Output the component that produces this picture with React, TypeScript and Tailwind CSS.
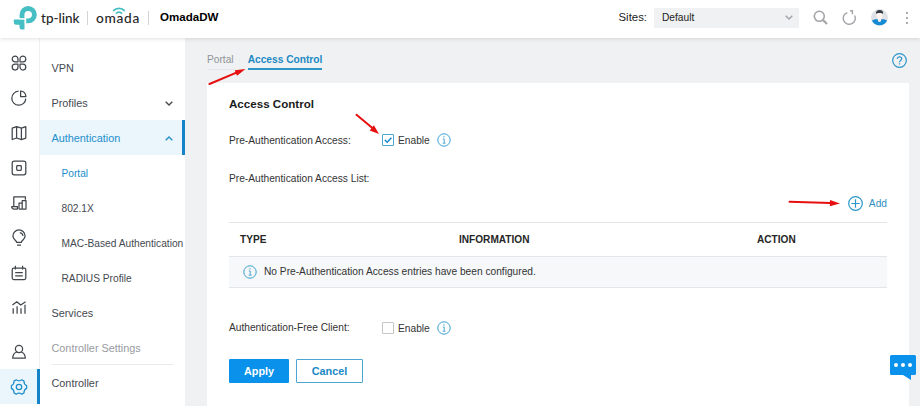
import type { ReactNode } from "react";
import clsx from "clsx";

interface MenuItem {
  label: string;
  sub?: boolean;
  active?: boolean;
  arrow?: "up" | "down";
}

const menu: MenuItem[] = [
  { label: "VPN" },
  { label: "Profiles", arrow: "down" },
  { label: "Authentication", arrow: "up", active: true },
  { label: "Portal", sub: true, active: true },
  { label: "802.1X", sub: true },
  { label: "MAC-Based Authentication", sub: true },
  { label: "RADIUS Profile", sub: true },
  { label: "Services" },
];

const navIcons: ReactNode[] = [
  <>
    <path d="M7 3.900a2.900 2.900 0 1 0-2.900 2.900H7z" />
    <path d="M9 6.800V3.900a2.900 2.900 0 1 1 2.900 2.900z" />
    <path d="M7 9.200v2.900a2.900 2.900 0 1 1-2.900-2.900z" />
    <path d="M9 9.200v2.900a2.900 2.900 0 1 0 2.900-2.900z" />
  </>,
  <>
    <path d="M7.600 1.200A7 7 0 1 0 14.800 8.600" />
    <path d="M9.600 1v5.600h5.300C14.700 3.600 12.600 1.300 9.600 1z" />
  </>,
  <path d="M1.200 3.100 5.600 1.600l4.800 1.600 4.400-1.500v11.400l-4.400 1.500L5.600 13l-4.400 1.500zM5.600 1.600V13M10.400 3.200v11.400" />,
  <>
    <rect x="1.200" y="1.200" width="13.600" height="13.600" rx="2" />
    <rect x="5.700" y="5.700" width="4.600" height="4.600" rx="0.800" />
  </>,
  <>
    <path d="M2.800 11.400V1.800h11.600v3M.8 11.600h5.600v2.400H2.400L.8 12.800z" />
    <path d="M8 14V8h3.200M8 14h7V5.600h-3.800V14" />
  </>,
  <>
    <path d="M5.700 12.400C5.500 10.600 1.900 9.400 1.900 6a6.100 6.100 0 0 1 12.200 0c0 3.400-3.600 4.600-3.800 6.400z" />
    <path d="M6 15.200h4M8.800 2.600c1.700.3 2.900 1.500 3.200 3.200" />
  </>,
  <>
    <rect x="1.200" y="3.200" width="13.600" height="11.400" rx="1.500" />
    <path d="M4.400.8v3.600M11.600.8v3.600M4.200 7.600h7.600M4.200 10.900h7.600" />
  </>,
  <path d="M2.200 8.200v5.600M6.100 6.200v7.600M10 8.200v5.600M14 4.700v9.100M1.400 5 5.800 1.800 9.700 5l4.900-3.200" />,
];

function NavIcon({ children }: { children: ReactNode }) {
  return (
    <svg
      className="size-4 overflow-visible"
      viewBox="0 0 16 16"
      fill="none"
      stroke="currentColor"
      strokeWidth="1.25"
      strokeLinejoin="round"
    >
      {children}
    </svg>
  );
}

function InfoIcon() {
  return (
    <svg className="size-[14px] shrink-0" viewBox="0 0 14 14" fill="none" stroke="#3b9fcf">
      <circle cx="7" cy="7" r="6.200" />
      <path d="M5.800 6h1.400v4M5.700 10.200h2.800" strokeWidth="0.900" />
      <path d="M6.400 3.900h1.100" strokeWidth="1.200" />
    </svg>
  );
}

function Chevron({ up }: { up?: boolean }) {
  return (
    <svg
      className={clsx("h-[5px] w-2", up && "rotate-180")}
      viewBox="0 0 8 5"
      fill="none"
      stroke="currentColor"
      strokeWidth="1.400"
    >
      <path d="M.7.700 4 4 7.300.700" />
    </svg>
  );
}

function EnableBox({ checked }: { checked?: boolean }) {
  return (
    <div className="flex items-center">
      <span
        className={clsx(
          "flex size-3 items-center justify-center rounded-[1px] border bg-white",
          checked ? "border-[#4aa5d2]" : "border-[#c4c6c9]"
        )}
      >
        {checked && (
          <svg className="size-2" viewBox="0 0 8 8" fill="none" stroke="#168acb" strokeWidth="1.500">
            <path d="M.8 4 3.200 6.300 7.400 1.700" />
          </svg>
        )}
      </span>
      <span className="mr-[7px] ml-1 pt-px">Enable</span>
      <InfoIcon />
    </div>
  );
}

function Header() {
  return (
    <header className="relative z-10 flex h-[38px] shrink-0 items-center bg-white pb-[3px] shadow-[0_1px_4px_rgba(0,0,0,0.12)]">
      <svg className="mt-px ml-[13px] size-6" viewBox="0 0 24 24" fill="none">
        <path d="M9 12.300V8.700a6.200 6.200 0 1 1 6.200 6.200H13.200" stroke="#45bec4" strokeWidth="4.800" />
        <path
          d="M.8 13.500h10.700v10H9a2.500 2.500 0 0 1-2.500-2.500v-2.300H3.300A2.500 2.500 0 0 1 .8 16.200z"
          fill="#45bec4"
        />
        <path d="M6 12.900h6.200v4.500" stroke="#fff" strokeWidth="0.900" />
      </svg>
      <span className="mt-[2px] ml-[4px] w-[39px] font-['Lato',sans-serif] text-[13.500px] leading-none font-medium whitespace-nowrap text-[#262626]">
        tp-link
      </span>
      <span className="ml-[7px] h-[14px] w-px bg-[#d2d4d6]" />
      <div className="relative ml-[8px] w-[44px] font-['Lato',sans-serif] text-[13.700px] leading-none font-medium tracking-[0.700px] text-[#262626]">
        omada
        <svg
          className="absolute -top-[4px] left-[16px] h-[8px] w-[14px]"
          viewBox="0 0 14 8"
          fill="none"
          stroke="#45bec4"
          strokeWidth="1.700"
        >
          <path d="M1.200 3.900c3-3.500 8.600-3.500 11.600 0M4 6.600c1.600-1.900 4.400-1.900 6 0" />
        </svg>
      </div>
      <span className="ml-[8px] h-[14px] w-px bg-[#d2d4d6]" />
      <span className="ml-[11px] text-[11.550px] font-bold text-black">OmadaDW</span>
      <div className="ml-auto flex items-center">
        <span className="mr-[7px] text-[11.400px] text-[#222]">Sites:</span>
        <div className="flex h-5 w-[145px] items-center justify-between bg-[#f0f1f2] pr-[6px] pl-[8px] text-[#222]">
          <span>Default</span>
          <span className="text-[#a0a3a6]">
            <Chevron />
          </span>
        </div>
        <svg className="ml-[14px] size-[15px]" viewBox="0 0 15 15" fill="none" stroke="#a2a4a7">
          <circle cx="6.300" cy="6.300" r="5" strokeWidth="1.600" />
          <path d="m10 10 4 4" strokeWidth="2.200" />
        </svg>
        <svg className="ml-[14px] size-[15px]" viewBox="0 0 15 15" fill="none" stroke="#a2a4a7" strokeWidth="1.400">
          <path d="M5.300 2.600A6 6 0 1 0 12.600 5.500" />
          <path d="M8 .800h2.400v3.400" />
        </svg>
        <svg className="ml-[14px] size-[17px]" viewBox="0 0 17 17">
          <circle cx="8.500" cy="8.500" r="8.500" fill="#dfe3e7" />
          <path d="M.9 11.600c1.500-1 3.200-1.300 4.800-1.300h5.600c1.600 0 3.300.3 4.800 1.300a8.500 8.500 0 0 1-15.200 0z" fill="#1689d3" />
          <path d="M6.800 8h3.400v3.200a1.700 1.700 0 0 1-3.400 0z" fill="#f8eeea" />
          <ellipse cx="8.500" cy="6.200" rx="3" ry="3.700" fill="#fff4f0" />
          <path d="M5 4.900C4.600 2.400 6.200 1 8.600 1c2.500 0 4 1.400 3.400 3.900-1-.6-1.400-1.100-4.600-1-1 0-1.600.4-2.400 1z" fill="#343a46" />
        </svg>
        <div className="mr-[12px] ml-[18px] flex flex-col gap-[3px]">
          <i className="size-[2px] bg-[#aaacae]" />
          <i className="size-[2px] bg-[#aaacae]" />
          <i className="size-[2px] bg-[#aaacae]" />
        </div>
      </div>
    </header>
  );
}

function Sidebar() {
  return (
    <nav className="flex w-10 shrink-0 flex-col border-r border-[#f0f1f3] bg-white pt-[7px] text-[#41464c]">
      {navIcons.map((icon, i) => (
        <div key={i} className="flex h-[35px] shrink-0 items-center pl-[11px]">
          <NavIcon>{icon}</NavIcon>
        </div>
      ))}
      <div className="mt-[9px] flex h-[35px] shrink-0 items-center pl-[11px]">
        <NavIcon>
          <circle cx="8" cy="5" r="3.600" />
          <path d="M5.800 8C3 9 1.700 11 1.700 14.200h12.600C14.300 11 13 9 10.200 8" />
        </NavIcon>
      </div>
      <div className="-mr-px flex h-[35px] shrink-0 items-center border-r-[3px] border-[#1583c7] bg-[#eaf5fc] pl-[11px] text-[#1f8ecb]">
        <NavIcon>
          <path d="M5.200.800c1.700 1.200 3.900 1.200 5.600 0l2.200 1.300c-.1 2.100.8 3.700 2.600 4.500v2.800c-1.800.8-2.700 2.400-2.600 4.500l-2.200 1.300c-1.700-1.200-3.900-1.200-5.600 0L3 13.900c.1-2.100-.8-3.700-2.600-4.500V6.600C2.200 5.800 3.100 4.200 3 2.100z" />
          <circle cx="8" cy="8" r="2.700" />
        </NavIcon>
      </div>
    </nav>
  );
}

function Menu() {
  return (
    <aside className="flex w-[145px] shrink-0 flex-col bg-white pt-[12px] text-[10.850px] text-[#454a50]">
      {menu.map((item) => (
        <div
          key={item.label}
          className={clsx(
            "flex h-[35px] shrink-0 items-center justify-between whitespace-nowrap",
            item.sub ? "pt-[3px] pl-[21.500px] text-[10.200px]" : "pt-px pr-[12px] pl-[11.500px]",
            item.active && "text-[#2490cc]",
            item.active && !item.sub && "border-r-[3px] border-[#1583c7] bg-[#eaf5fc] !pr-[9px]"
          )}
        >
          {item.label}
          {item.arrow && <Chevron up={item.arrow === "up"} />}
        </div>
      ))}
      <div className="mr-[11px] ml-[11.500px] flex h-[35px] shrink-0 items-center border-b border-[#e9eaec] pt-[2px] text-[#989b9f]">
        Controller Settings
      </div>
      <div className="flex h-[35px] shrink-0 items-center pt-px pl-[11.500px]">Controller</div>
    </aside>
  );
}

function AccessCard() {
  return (
    <section className="mr-[11px] ml-[22px] flex flex-1 flex-col bg-white px-[22px] pt-[13px]">
      <h2 className="h-4 text-[11.600px] leading-4 font-bold text-[#1c1c1c]">Access Control</h2>
      <div className="mt-[20px] flex h-4 items-center">
        <span className="w-[153px] pt-px">Pre-Authentication Access:</span>
        <EnableBox checked />
      </div>
      <div className="mt-[22px] flex h-4 items-center pt-px">Pre-Authentication Access List:</div>
      <div className="mt-[9px] flex h-4 items-center justify-end text-[#318fbd]">
        <svg className="mr-[6px] size-[15px]" viewBox="0 0 15 15" fill="none" stroke="#2b96c9" strokeWidth="1.200">
          <circle cx="7.500" cy="7.500" r="6.800" />
          <path d="M7.500 3.300v8.400M3.300 7.500h8.400" />
        </svg>
        <span className="pt-px">Add</span>
      </div>
      <div className="mt-[11px] border-y border-[#e3e6e9]">
        <div className="grid h-[33px] grid-cols-[219px_298px_1fr] items-center pl-[11px] text-[10.100px] font-bold text-[#262626]">
          <span>TYPE</span>
          <span>INFORMATION</span>
          <span>ACTION</span>
        </div>
        <div className="flex h-[31px] items-center gap-[7px] border-t border-[#e3e6e9] bg-[#f6f8fa] pl-[14px]">
          <InfoIcon />
          No Pre-Authentication Access entries have been configured.
        </div>
      </div>
      <div className="mt-[32px] flex h-4 items-center">
        <span className="w-[153px]">Authentication-Free Client:</span>
        <EnableBox />
      </div>
      <div className="mt-[23px] flex gap-[7px] text-[10.850px] font-bold">
        <button className="h-6 w-[60px] rounded-[1px] bg-[#0a91eb] text-white">Apply</button>
        <button className="h-6 w-[67px] rounded-[1px] border border-[#4aa5d2] bg-white text-[#2089c4]">
          Cancel
        </button>
      </div>
    </section>
  );
}

export default function App() {
  return (
    <div className="relative flex h-[406px] w-[920px] flex-col overflow-hidden bg-[#f0f1f3] font-['Liberation_Sans',Arial,sans-serif] text-[10.200px] text-[#333]">
      <Header />
      <div className="flex min-h-0 flex-1">
        <Sidebar />
        <Menu />
        <main className="flex flex-1 flex-col">
          <div className="flex h-[45px] shrink-0 items-start justify-between pr-[13px] pl-[22px]">
            <div className="flex gap-[14px] pt-[13px]">
              <span className="h-[19px] border-b border-[#e4e6e9] leading-[17px] text-[#8f9396]">Portal</span>
              <span className="h-[19px] border-b-2 border-[#2d96c6] leading-[17px] font-bold text-[#2089c4]">
                Access Control
              </span>
            </div>
            <svg className="mt-[15px] size-[15px]" viewBox="0 0 15 15" fill="none" stroke="#2b96c9" strokeWidth="1.200">
              <circle cx="7.500" cy="7.500" r="6.800" />
              <path d="M5.300 6c0-1.500 1-2.200 2.200-2.200s2.200.8 2.200 2c0 1.600-2.200 1.700-2.200 3.500M7.500 10.300v1.300" />
            </svg>
          </div>
          <AccessCard />
        </main>
      </div>

      <svg className="absolute top-[355px] left-[890px] z-20 h-[26px] w-[26px]" viewBox="0 0 26 26">
        <path
          d="M1.500 0h23A1.500 1.500 0 0 1 26 1.500V18.500A1.500 1.500 0 0 1 24.500 20H21v5l-8-5H1.500A1.500 1.500 0 0 1 0 18.500v-17A1.500 1.500 0 0 1 1.500 0z"
          fill="#0a91eb"
        />
        <g fill="#fff">
          <circle cx="6" cy="10" r="2" />
          <circle cx="13" cy="10" r="2" />
          <circle cx="20" cy="10" r="2" />
        </g>
      </svg>

      {/* callout arrows */}
      <svg className="pointer-events-none absolute inset-0 z-20" width="920" height="406" fill="#e5100f" stroke="#e5100f">
        <path
          d="M209.500 84 237 72.300M356.500 114.800 373 128.500M789.500 201.700l41 1.200"
          strokeWidth="2"
          strokeLinecap="round"
        />
        <path stroke="none" d="m245.500 69-8.500 6.700-2.300-5.500zM379 134l-9.300-3.500 4.200-5.200zM840 203.400l-10.200 2.900.2-6.300z" />
      </svg>
    </div>
  );
}
